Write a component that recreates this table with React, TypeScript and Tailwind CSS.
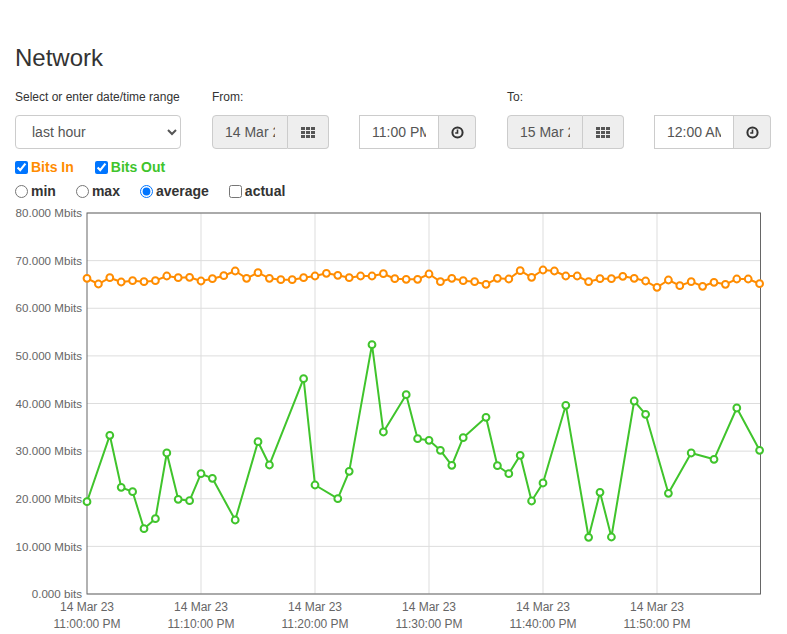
import { type ReactNode } from 'react';

const ORANGE = '#ff8c00';
const GREEN = '#40c42c';

// one sample per minute, Mbits
const bitsIn = [
  66.29, 65.09, 66.41, 65.51, 65.79, 65.58, 65.79, 66.77, 66.41, 66.5,
  65.72, 66.2, 66.83, 67.82, 66.29, 67.46, 66.29, 66.0, 66.0, 66.41,
  66.77, 67.34, 66.92, 66.41, 66.77, 66.77, 67.25, 66.2, 66.08, 66.08,
  67.19, 65.58, 66.29, 65.79, 65.58, 65.03, 66.29, 66.14, 67.89, 66.5,
  68.03, 67.82, 66.77, 66.77, 65.58, 66.2, 66.2, 66.71, 66.29, 65.72,
  64.4, 65.93, 64.73, 65.58, 64.61, 65.45, 65.03, 66.14, 66.14, 65.15,
];

// [minute, Mbits] - out has gaps
const bitsOut: [number, number][] = [
  [0, 19.38], [2, 33.32], [3, 22.4], [4, 21.48], [5, 13.71], [6, 15.81],
  [7, 29.61], [8, 19.88], [9, 19.59], [10, 25.26], [11, 24.29], [13, 15.54],
  [15, 31.98], [16, 27.09], [19, 45.21], [20, 22.89], [22, 20.01], [23, 25.76],
  [25, 52.35], [26, 34.02], [28, 41.85], [29, 32.61], [30, 32.27], [31, 30.17],
  [32, 27.02], [33, 32.82], [35, 37.1], [36, 26.94], [37, 25.26], [38, 29.12],
  [39, 19.53], [40, 23.31], [42, 39.62], [44, 11.91], [45, 21.35], [46, 11.97],
  [48, 40.52], [49, 37.73], [51, 21.14], [53, 29.61], [55, 28.28], [57, 39.06],
  [59, 30.17],
];

const PLOT = { left: 87, right: 760.5, top: 9, bottom: 390 };
const MIN_W = 11.4;
const PX_PER_MBIT = (PLOT.bottom - PLOT.top) / 80;
const px = (i: number) => PLOT.left + i * MIN_W;
const py = (v: number) => PLOT.bottom - v * PX_PER_MBIT;

const yTicks = [80, 70, 60, 50, 40, 30, 20, 10, 0];
const xTicks = ['11:00:00 PM', '11:10:00 PM', '11:20:00 PM', '11:30:00 PM', '11:40:00 PM', '11:50:00 PM'];

function GridIcon() {
  return (
    <svg width="14" height="11" viewBox="0 0 14 11" fill="#555">
      {[0, 5, 10].map(x =>
        [0, 4, 8].map(y => <rect key={`${x}-${y}`} x={x} y={y} width="4" height="3" />)
      )}
    </svg>
  );
}

function ClockIcon() {
  return (
    <svg width="13" height="13" viewBox="0 0 13 13" fill="none" stroke="#333" strokeWidth="2">
      <circle cx="6.5" cy="6.5" r="5.1" />
      <path d="M6.5 3.4V7H4.2" strokeWidth="1.6" />
    </svg>
  );
}

function DateGroup({ value }: { value: string }) {
  return (
    <div className="flex h-[34px]">
      <input
        readOnly
        value={value}
        className="w-[76px] rounded-l-[4px] border border-[#ccc] bg-[#eee] px-[12px] text-[14px] text-[#555] outline-none"
      />
      <span className="flex w-[41px] items-center justify-center rounded-r-[4px] border border-l-0 border-[#ccc] bg-[#eee]">
        <GridIcon />
      </span>
    </div>
  );
}

function TimeGroup({ value }: { value: string }) {
  return (
    <div className="flex h-[34px]">
      <input
        readOnly
        value={value}
        className="w-[80px] border border-[#ccc] bg-white px-[12px] text-[14px] text-[#555] outline-none"
      />
      <span className="flex w-[37px] items-center justify-center rounded-r-[4px] border border-l-0 border-[#ccc] bg-[#eee]">
        <ClockIcon />
      </span>
    </div>
  );
}

function Field({ label, width, children }: { label?: string; width: string; children: ReactNode }) {
  return (
    <div className={`flex flex-col ${width}`}>
      <label className="h-[17px] text-[12px] leading-[17px]">{label}</label>
      <div className="mt-[9px]">{children}</div>
    </div>
  );
}

function Option({ type, checked, color, children }: { type: 'checkbox' | 'radio'; checked?: boolean; color: string; children: ReactNode }) {
  return (
    <label className="flex items-center gap-[3px]">
      <input type={type} name={type === 'radio' ? 'agg' : undefined} defaultChecked={checked} className="m-0 h-[13px] w-[13px]" />
      <span className={`text-[14px] font-bold leading-[20px] ${color}`}>{children}</span>
    </label>
  );
}

function Chart() {
  const inPts = bitsIn.map((v, i) => [px(i), py(v)]);
  const outPts = bitsOut.map(([i, v]) => [px(i), py(v)]);
  return (
    <svg width="787" height="428" viewBox="0 0 787 428" className="block overflow-visible" fontFamily="'Liberation Sans', Arial, sans-serif">
      {yTicks.map(t => (
        <g key={t}>
          <line x1={PLOT.left} x2={PLOT.right} y1={py(t)} y2={py(t)} stroke="#ddd" />
          <text x="82" y={py(t) + 4.2} fontSize="11.6" fill="#666" textAnchor="end">
            {t === 0 ? '0.000 bits' : `${t}.000 Mbits`}
          </text>
        </g>
      ))}
      {xTicks.map((t, k) => {
        const x = px(k * 10);
        return (
          <g key={t}>
            {k > 0 && <line x1={x} x2={x} y1={PLOT.top} y2={PLOT.bottom} stroke="#ddd" />}
            <text x={x} y="406.7" fontSize="12" fill="#666" textAnchor="middle">14 Mar 23</text>
            <text x={x} y="424" fontSize="12" fill="#666" textAnchor="middle">{t}</text>
          </g>
        );
      })}
      <rect x={PLOT.left} y={PLOT.top} width={PLOT.right - PLOT.left} height={PLOT.bottom - PLOT.top} fill="none" stroke="#666" />

      <polyline points={outPts.map(p => p.join(',')).join(' ')} fill="none" stroke={GREEN} strokeWidth="2" strokeLinejoin="round" />
      {outPts.map(([x, y], i) => (
        <circle key={i} cx={x} cy={y} r="3.4" fill="#fff" stroke={GREEN} strokeWidth="2" />
      ))}

      <polyline points={inPts.map(p => p.join(',')).join(' ')} fill="none" stroke={ORANGE} strokeWidth="2" strokeLinejoin="round" />
      {inPts.map(([x, y], i) => (
        <circle key={i} cx={x} cy={y} r="3.4" fill="#fff" stroke={ORANGE} strokeWidth="2" />
      ))}
    </svg>
  );
}

export default function App() {
  return (
    <div className="font-['Liberation_Sans',Arial,sans-serif] text-[#333]">
      <div className="px-[15px]">
        <h1 className="pt-[45px] text-[24px] leading-[26px]">Network</h1>

        <div className="mt-[18px] flex">
          <Field label="Select or enter date/time range" width="w-[197px]">
            <select defaultValue="hour" className="h-[34px] w-[166px] rounded-[4px] border border-[#ccc] bg-white px-[12px] text-[14px] text-[#555] outline-none">
              <option value="hour">last hour</option>
              <option value="day">last day</option>
              <option value="week">last week</option>
            </select>
          </Field>
          <Field label="From:" width="w-[147px]">
            <DateGroup value="14 Mar 2023" />
          </Field>
          <Field width="w-[148px]">
            <TimeGroup value="11:00 PM" />
          </Field>
          <Field label="To:" width="w-[147px]">
            <DateGroup value="15 Mar 2023" />
          </Field>
          <Field width="w-[118px]">
            <TimeGroup value="12:00 AM" />
          </Field>
        </div>

        <div className="mt-[6px] flex h-[24px] items-center gap-[21px]">
          <Option type="checkbox" checked color="text-[#ff8c00]">Bits In</Option>
          <Option type="checkbox" checked color="text-[#40c42c]">Bits Out</Option>
        </div>
        <div className="flex h-[24px] items-center gap-[20px]">
          <Option type="radio" color="text-[#333]">min</Option>
          <Option type="radio" color="text-[#333]">max</Option>
          <Option type="radio" checked color="text-[#333]">average</Option>
          <Option type="checkbox" color="text-[#333]">actual</Option>
        </div>
      </div>

      <div className="mt-[1px]">
        <Chart />
      </div>
    </div>
  );
}
